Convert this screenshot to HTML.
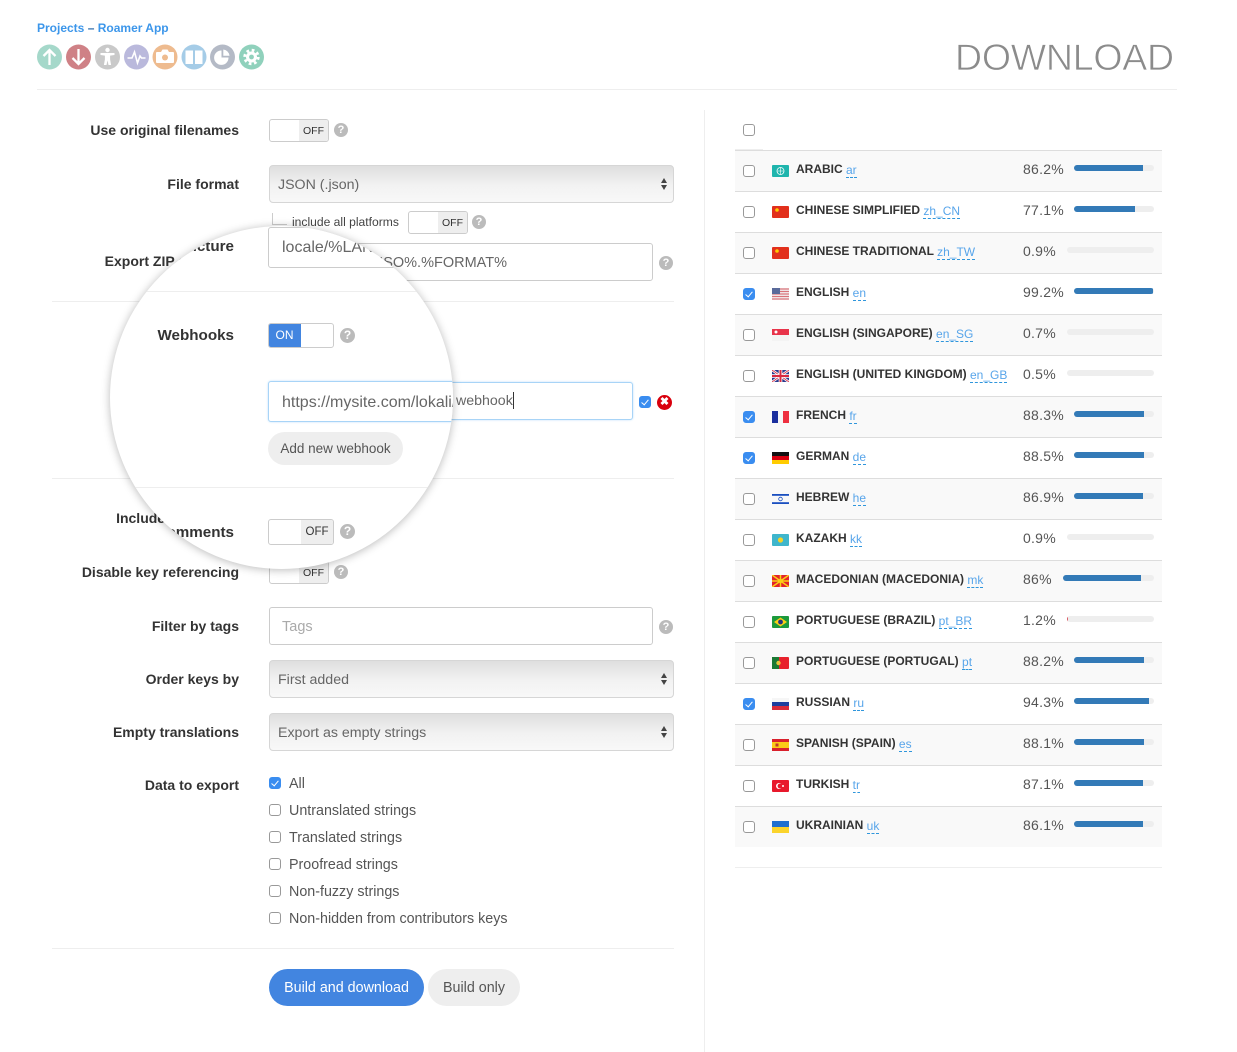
<!DOCTYPE html>
<html lang="en"><head><meta charset="utf-8"><title>Download</title>
<style>
html,body{margin:0;padding:0;background:#fff}
body{width:1237px;height:1052px;position:relative;overflow:hidden;font-family:"Liberation Sans",sans-serif;color:#555}
.t{position:absolute;white-space:nowrap;line-height:20px;height:20px}
.l{position:absolute;right:998px;white-space:nowrap;line-height:20px;font-weight:bold;font-size:14px;color:#333}
.hr{position:absolute;height:1px;background:#eee}
.tg{position:absolute;box-sizing:border-box;width:60px;height:23px;border:1px solid #ccc;border-radius:3px;background:#fff;overflow:hidden}
.tg b{position:absolute;right:0;top:0;width:29px;height:100%;background:#eee;font:normal 10.5px/22px "Liberation Sans",sans-serif;color:#333;text-align:center}
.h{position:absolute;width:14px;height:14px;border-radius:50%;background:#bbb;color:#fff;font:bold 11px/14px "Liberation Sans",sans-serif;text-align:center}
.inp{position:absolute;box-sizing:border-box;background:#fff;border:1px solid #ccc;border-radius:3px}
.sel{position:absolute;box-sizing:border-box;left:269px;width:405px;height:38px;border:1px solid #d6d6d6;border-radius:4px;background:linear-gradient(#dedede,#f2f2f2 55%,#f8f8f8);font-size:14.2px;line-height:38px;padding-left:8px;color:#666}
.sel i{position:absolute;right:6px;top:12px;width:0;height:0;border:3.5px solid transparent;border-bottom:5px solid #444;border-top:0}
.sel u{position:absolute;right:6px;top:19px;width:0;height:0;border:3.5px solid transparent;border-top:5px solid #444;border-bottom:0}
.c{position:absolute;box-sizing:border-box;width:12px;height:12px;border:1px solid #999;border-radius:3px;background:#fff}
.c.on{background:#3a8df0;border-color:#3a8df0}
.c.on:after{content:"";position:absolute;left:3.2px;top:.8px;width:3px;height:6px;border:solid #fff;border-width:0 1.6px 1.6px 0;transform:rotate(40deg)}
.ck{position:absolute;left:289px;font-size:14.3px;line-height:20px;color:#555;white-space:nowrap;margin-top:1px}
.row{position:absolute;left:735px;width:427px;height:41px;box-sizing:border-box;border-top:1px solid #ddd}
.row.a{background:#f9f9f9}
.row .c{left:8px;top:14px}
.row svg{position:absolute;left:37px;top:14px;width:17px;height:12px}
.n{position:absolute;left:61px;top:8px;line-height:20px;font-size:12px;font-weight:bold;color:#333;white-space:nowrap}
.n span{font-weight:normal;color:#58a5ea;border-bottom:1px dashed #2f96dc;display:inline-block;line-height:14px;position:relative;top:1px}
.p{position:absolute;left:288px;top:8px;line-height:20px;font-size:14px;color:#555;letter-spacing:.25px}
.b{position:absolute;right:8px;top:14px;height:6px;border-radius:3px;background:#eee;width:80px;overflow:hidden}
.b i{position:absolute;left:0;top:0;height:6px;background:#337ab7}
#circle{position:absolute;left:109.5px;top:225.5px;width:343px;height:343px;border-radius:50%;overflow:hidden;background:#fff;box-shadow:0 1px 9px rgba(0,0,0,.28)}
#inner{position:absolute;left:-109.5px;top:-225.5px;width:1237px;height:1052px}
.L{position:absolute;right:1003px;font-size:15.2px;font-weight:bold;color:#333;line-height:20px;white-space:nowrap}
.btn{position:absolute;border-radius:19px;text-align:center;font-size:14.3px}
</style></head><body>

<div class="t" style="left:37px;top:18px;font-size:12px;font-weight:bold;color:#3c96ea">Projects <span style="color:#2b6aa8">–</span> Roamer App</div>

<svg style="position:absolute;left:0;top:0" width="300" height="80" viewBox="0 0 300 80">
<g transform="translate(49.5 57)"><circle r="12.5" fill="#a5d8ca"/><path d="M0 8V-7M-6 -1L0 -7L6 -1" fill="none" stroke="#fff" stroke-width="2.300"/></g>
<g transform="translate(78.5 57)"><circle r="12.5" fill="#cf8186"/><path d="M0 -8V7M-6 1L0 7L6 1" fill="none" stroke="#fff" stroke-width="2.300"/></g>
<g transform="translate(107.5 57)"><circle r="12.5" fill="#c9c9c9"/><circle cy="-7" r="2.200" fill="#fff"/><path d="M-7 -4H7V-2L2.600 -1.400V2.400L3.600 8H1L0 3.400L-1 8H-3.600L-2.600 2.400V-1.400L-7 -2Z" fill="#fff"/></g>
<g transform="translate(136.5 57)"><circle r="12.5" fill="#bab9dc"/><path d="M-9 1H-4.500L-2 -5L1 6L3.500 -1L5 1H9" fill="none" stroke="#fff" stroke-width="1.600"/></g>
<g transform="translate(165 57)"><circle r="12.5" fill="#eebb8f"/><path d="M-8 -5H-4L-2.500 -7.500H2.500L4 -5H8Q9 -5 9 -4V5Q9 6 8 6H-8Q-9 6 -9 5V-4Q-9 -5 -8 -5Z" fill="#fff"/><circle cy="0.500" r="3" fill="#eebb8f"/></g>
<g transform="translate(194 57)"><circle r="12.5" fill="#a5cce7"/><path d="M-8.500 -6.500H-1V7H-8.500ZM1 -6.500H8.500V7H1Z" fill="#fff"/></g>
<g transform="translate(222.500 57)"><circle r="12.5" fill="#b4bac6"/><path d="M-1 -6.500V0.500H6A7.200 7.200 0 1 1 -1 -6.500Z" fill="#fff"/><path d="M0.800 -7.500A7 7 0 0 1 7 -1.200H0.800Z" fill="#fff"/></g>
<g transform="translate(251.500 57)"><circle r="12.5" fill="#90d1bc"/><circle r="6.800" fill="none" stroke="#fff" stroke-width="2.800" stroke-dasharray="2.700 2.640"/><circle r="5.500" fill="#fff"/><circle r="2.400" fill="#90d1bc"/></g>
</svg>

<div class="t" style="left:955px;top:32px;height:50px;line-height:50px;font-size:37.5px;color:#8b8b8b;-webkit-text-stroke:.7px #fff;letter-spacing:-.25px">DOWNLOAD</div>
<div class="hr" style="left:37px;top:89px;width:1140px"></div>
<div style="position:absolute;left:704px;top:110px;width:1px;height:942px;background:#eee"></div>

<div class="l" style="top:120px">Use original filenames</div>
<div class="tg" style="left:269px;top:119px"><b>OFF</b></div><div class="h" style="left:334px;top:123px">?</div>

<div class="l" style="top:174px">File format</div>
<div class="sel" style="top:165px">JSON (.json)<i></i><u></u></div>

<div style="position:absolute;left:272px;top:213px;width:14px;height:11px;border-left:1px solid #ccc;border-bottom:1px solid #ccc"></div>
<div class="t" style="left:292px;top:212px;font-size:12.1px;color:#444">include all platforms</div>
<div class="tg" style="left:408px;top:211px"><b>OFF</b></div><div class="h" style="left:472px;top:215px">?</div>

<div class="l" style="top:251px">Export ZIP structure</div>
<div class="inp" style="left:269px;top:243px;width:384px;height:38px"></div>
<div class="t" style="right:730px;top:253px;font-size:14.500px;color:#666">locale/%LANG_ISO%.%FORMAT%</div>
<div class="h" style="left:659px;top:256px">?</div>

<div class="hr" style="left:52px;top:301px;width:622px"></div>

<div class="inp" style="left:269px;top:382px;width:364px;height:38px;border-color:#a8d4f7;box-shadow:0 0 2px #bfe0fa"></div>
<div class="t" style="left:456px;top:391px;font-size:14.2px;color:#666">webhook</div>
<div style="position:absolute;left:513px;top:392px;width:1px;height:17px;background:#333"></div>
<div class="c on" style="left:639px;top:396px"></div>
<div style="position:absolute;left:657px;top:395px;width:15px;height:15px;border-radius:50%;background:#d9000d;color:#fff;font:bold 11px/15px 'Liberation Sans',sans-serif;text-align:center">✖</div>

<div class="hr" style="left:52px;top:478px;width:622px"></div>

<div class="l" style="top:508px">Include comments</div>
<div class="l" style="top:562px">Disable key referencing</div>
<div class="tg" style="left:269px;top:561px"><b>OFF</b></div><div class="h" style="left:334px;top:565px">?</div>

<div class="l" style="top:616px">Filter by tags</div>
<div class="inp" style="left:269px;top:607px;width:384px;height:38px"></div>
<div class="t" style="left:282px;top:617px;font-size:14.500px;color:#aaa">Tags</div>
<div class="h" style="left:659px;top:620px">?</div>

<div class="l" style="top:669px">Order keys by</div>
<div class="sel" style="top:660px">First added<i></i><u></u></div>
<div class="l" style="top:722px">Empty translations</div>
<div class="sel" style="top:713px">Export as empty strings<i></i><u></u></div>

<div class="l" style="top:775px">Data to export</div>
<div class="c on" style="left:269px;top:777px"></div><div class="ck" style="top:773px">All</div>
<div class="c" style="left:269px;top:804px"></div><div class="ck" style="top:800px">Untranslated strings</div>
<div class="c" style="left:269px;top:831px"></div><div class="ck" style="top:827px">Translated strings</div>
<div class="c" style="left:269px;top:858px"></div><div class="ck" style="top:854px">Proofread strings</div>
<div class="c" style="left:269px;top:885px"></div><div class="ck" style="top:881px">Non-fuzzy strings</div>
<div class="c" style="left:269px;top:912px"></div><div class="ck" style="top:908px">Non-hidden from contributors keys</div>

<div class="hr" style="left:52px;top:948px;width:622px"></div>
<div class="btn" style="left:269px;top:969px;width:155px;height:37px;line-height:38px;background:#4285e0;color:#fff">Build and download</div>
<div class="btn" style="left:428px;top:969px;width:92px;height:37px;line-height:38px;background:#eee;color:#555">Build only</div>

<!-- magnifier -->
<div id="circle"><div id="inner">
<div class="L" style="top:237px">Export ZIP structure</div>
<div class="inp" style="left:268px;top:227px;width:385px;height:41px"></div>
<div class="t" style="left:282px;top:238px;font-size:16px;color:#666">locale/%LANG_ISO%.%FORMAT%</div>
<div class="hr" style="left:52px;top:291px;width:622px"></div>
<div class="L" style="top:326px">Webhooks</div>
<div style="position:absolute;box-sizing:border-box;left:268px;top:323px;width:66px;height:25px;border:1px solid #ccc;border-radius:3px;overflow:hidden;background:#fff"><div style="position:absolute;left:-1px;top:-1px;width:33px;height:25px;background:#4285e0;color:#fff;font-size:12px;line-height:25px;text-align:center">ON</div></div>
<div class="h" style="left:340px;top:328px;width:15px;height:15px;line-height:15px;font-size:12px">?</div>
<div class="inp" style="left:268px;top:381px;width:385px;height:41px;border-color:#a8d4f7;box-shadow:0 0 2px #bfe0fa"></div>
<div class="t" style="left:282px;top:393px;font-size:16px;color:#666">https://mysite.com/lokali/webhook</div>
<div class="btn" style="left:268px;top:432px;width:135px;height:33px;line-height:34px;background:#eee;color:#555;font-size:13.500px">Add new webhook</div>
<div class="hr" style="left:52px;top:487px;width:622px"></div>
<div class="L" style="top:523px">Include comments</div>
<div class="tg" style="left:268px;top:519px;width:66px;height:26px"><b style="width:32px;line-height:24px;font-size:11.500px">OFF</b></div>
<div class="h" style="left:340px;top:524px;width:15px;height:15px;line-height:15px;font-size:12px">?</div>
</div></div>

<!-- language list -->
<div class="c" style="left:743px;top:124px"></div>
<div style="position:absolute;left:735px;top:149px;width:28px;height:1px;background:#eee"></div>

<div class="row a" style="top:150px"><div class="c"></div>
<svg viewBox="0 0 17 12"><rect width="17" height="12" rx="1" fill="#1fb5ad"/><circle cx="8.500" cy="6" r="3.500" fill="none" stroke="#fff" stroke-width=".8"/><path d="M5 6H12M8.500 2.500V9.500" stroke="#fff" stroke-width=".6"/></svg>
<div class="n">ARABIC <span>ar</span></div><div class="p">86.2%</div><div class="b"><i style="width:69px"></i></div></div>

<div class="row" style="top:191px"><div class="c"></div>
<svg viewBox="0 0 17 12"><rect width="17" height="12" rx="1" fill="#e2301c"/><circle cx="5" cy="4" r="1.800" fill="#fc0"/></svg>
<div class="n">CHINESE SIMPLIFIED <span>zh_CN</span></div><div class="p">77.1%</div><div class="b"><i style="width:61px"></i></div></div>

<div class="row a" style="top:232px"><div class="c"></div>
<svg viewBox="0 0 17 12"><rect width="17" height="12" rx="1" fill="#e2301c"/><circle cx="5" cy="4" r="1.800" fill="#fc0"/></svg>
<div class="n">CHINESE TRADITIONAL <span>zh_TW</span></div><div class="p">0.9%</div><div class="b" style="width:87px"></div></div>

<div class="row" style="top:273px"><div class="c on"></div>
<svg viewBox="0 0 17 12"><rect width="17" height="12" fill="#f3f3f3"/><path d="M0 1H17M0 3.500H17M0 6H17M0 8.500H17M0 11H17" stroke="#d9737a" stroke-width="1.200"/><rect width="8" height="6" fill="#5a6a9a"/></svg>
<div class="n">ENGLISH <span>en</span></div><div class="p">99.2%</div><div class="b"><i style="width:79px"></i></div></div>

<div class="row a" style="top:314px"><div class="c"></div>
<svg viewBox="0 0 17 12"><rect width="17" height="12" fill="#f4f4f4"/><rect width="17" height="6" fill="#e8344a"/><circle cx="4" cy="3" r="1.500" fill="#fff"/></svg>
<div class="n">ENGLISH (SINGAPORE) <span>en_SG</span></div><div class="p">0.7%</div><div class="b" style="width:87px"></div></div>

<div class="row" style="top:355px"><div class="c"></div>
<svg viewBox="0 0 17 12"><rect width="17" height="12" rx="1" fill="#2b3a8c"/><path d="M0 0L17 12M17 0L0 12" stroke="#fff" stroke-width="2.400"/><path d="M0 0L17 12M17 0L0 12" stroke="#d8283f" stroke-width=".8"/><path d="M8.500 0V12M0 6H17" stroke="#fff" stroke-width="3.600"/><path d="M8.500 0V12M0 6H17" stroke="#d8283f" stroke-width="2"/></svg>
<div class="n">ENGLISH (UNITED KINGDOM) <span>en_GB</span></div><div class="p">0.5%</div><div class="b" style="width:87px"></div></div>

<div class="row a" style="top:396px"><div class="c on"></div>
<svg viewBox="0 0 17 12"><rect width="6" height="12" fill="#1b2f9e"/><rect x="6" width="5" height="12" fill="#f6f6f6"/><rect x="11" width="6" height="12" fill="#ee3040"/></svg>
<div class="n">FRENCH <span>fr</span></div><div class="p">88.3%</div><div class="b"><i style="width:70px"></i></div></div>

<div class="row" style="top:437px"><div class="c on"></div>
<svg viewBox="0 0 17 12"><rect width="17" height="4" fill="#111"/><rect y="4" width="17" height="4" fill="#d8000f"/><rect y="8" width="17" height="4" fill="#fc0"/></svg>
<div class="n">GERMAN <span>de</span></div><div class="p">88.5%</div><div class="b"><i style="width:70px"></i></div></div>

<div class="row a" style="top:478px"><div class="c"></div>
<svg viewBox="0 0 17 12"><rect width="17" height="12" fill="#f8f8f8"/><rect y="1" width="17" height="1.800" fill="#1a4fc0"/><rect y="9.200" width="17" height="1.800" fill="#1a4fc0"/><circle cx="8.500" cy="6" r="1.800" fill="none" stroke="#1a4fc0" stroke-width=".8"/></svg>
<div class="n">HEBREW <span>he</span></div><div class="p">86.9%</div><div class="b"><i style="width:69px"></i></div></div>

<div class="row" style="top:519px"><div class="c"></div>
<svg viewBox="0 0 17 12"><rect width="17" height="12" rx="1" fill="#3fb6cc"/><circle cx="8.500" cy="6" r="2.600" fill="#f5d327"/></svg>
<div class="n">KAZAKH <span>kk</span></div><div class="p">0.9%</div><div class="b" style="width:87px"></div></div>

<div class="row a" style="top:560px"><div class="c"></div>
<svg viewBox="0 0 17 12"><rect width="17" height="12" fill="#e3242b"/><path d="M8.500 6L0 0M8.500 6L17 0M8.500 6L0 12M8.500 6L17 12M8.500 6V0M8.500 6V12M8.500 6H0M8.500 6H17" stroke="#fbd016" stroke-width="1.500"/><circle cx="8.500" cy="6" r="2" fill="#fbd016"/></svg>
<div class="n">MACEDONIAN (MACEDONIA) <span>mk</span></div><div class="p">86%</div><div class="b" style="width:91px"><i style="width:78px"></i></div></div>

<div class="row" style="top:601px"><div class="c"></div>
<svg viewBox="0 0 17 12"><rect width="17" height="12" rx="1" fill="#1c9a3c"/><path d="M8.500 1.500L15 6L8.500 10.500L2 6Z" fill="#fbd016"/><circle cx="8.500" cy="6" r="2.400" fill="#24357d"/></svg>
<div class="n">PORTUGUESE (BRAZIL) <span>pt_BR</span></div><div class="p">1.2%</div><div class="b" style="width:87px"><i style="width:1px;background:#d9535f"></i></div></div>

<div class="row a" style="top:642px"><div class="c"></div>
<svg viewBox="0 0 17 12"><rect width="17" height="12" rx="1" fill="#e8222c"/><rect width="7" height="12" fill="#1c7a34"/><circle cx="6.500" cy="6" r="2.200" fill="#e9c53c"/></svg>
<div class="n">PORTUGUESE (PORTUGAL) <span>pt</span></div><div class="p">88.2%</div><div class="b"><i style="width:70px"></i></div></div>

<div class="row" style="top:683px"><div class="c on"></div>
<svg viewBox="0 0 17 12"><rect width="17" height="4" fill="#f6f6f6"/><rect y="4" width="17" height="4" fill="#1d3f9e"/><rect y="8" width="17" height="4" fill="#d92c3a"/></svg>
<div class="n">RUSSIAN <span>ru</span></div><div class="p">94.3%</div><div class="b"><i style="width:75px"></i></div></div>

<div class="row a" style="top:724px"><div class="c"></div>
<svg viewBox="0 0 17 12"><rect width="17" height="12" fill="#d9202c"/><rect y="3" width="17" height="6" fill="#fbcb16"/><rect x="3.500" y="4.500" width="3" height="3" fill="#c0392b"/></svg>
<div class="n">SPANISH (SPAIN) <span>es</span></div><div class="p">88.1%</div><div class="b"><i style="width:70px"></i></div></div>

<div class="row" style="top:765px"><div class="c"></div>
<svg viewBox="0 0 17 12"><rect width="17" height="12" rx="1" fill="#e8192c"/><circle cx="7" cy="6" r="3" fill="#fff"/><circle cx="8" cy="6" r="2.400" fill="#e8192c"/><circle cx="11" cy="6" r="1" fill="#fff"/></svg>
<div class="n">TURKISH <span>tr</span></div><div class="p">87.1%</div><div class="b"><i style="width:69px"></i></div></div>

<div class="row a" style="top:806px"><div class="c"></div>
<svg viewBox="0 0 17 12"><rect width="17" height="6" fill="#1f6fd0"/><rect y="6" width="17" height="6" fill="#fbd42c"/></svg>
<div class="n">UKRAINIAN <span>uk</span></div><div class="p">86.1%</div><div class="b"><i style="width:69px"></i></div></div>

<div class="hr" style="left:735px;top:867px;width:427px"></div>
</body></html>
